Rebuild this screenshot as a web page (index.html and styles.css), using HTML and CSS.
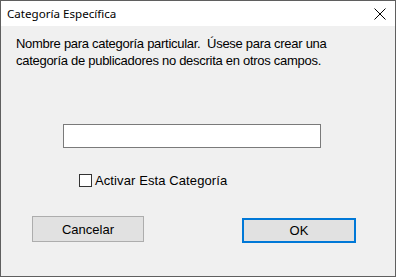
FILE: index.html
```html
<!DOCTYPE html>
<html>
<head>
  <meta charset="utf-8">
  <title>Categoría Específica</title>
  <link rel="stylesheet" href="styles.css">
</head>
<body>
  <div class="window">
    <!-- Title bar -->
    <div class="titlebar">
      <span class="title">Categoría Específica</span>
      <span class="close">
        <svg width="12" height="12" viewBox="0 0 12 12">
          <path d="M0.5 0.5 L11.5 11.5 M11.5 0.5 L0.5 11.5" stroke="#000" stroke-width="1" fill="none"/>
        </svg>
      </span>
    </div>

    <div class="content">
      <p class="description">Nombre para categoría particular.&nbsp; Úsese para crear una<br>categoría de publicadores no descrita en otros campos.</p>

      <input type="text" class="name-input">

      <label class="check-row">
        <span class="checkbox"></span>
        <span>Activar Esta Categoría</span>
      </label>

      <div class="buttons">
        <button class="btn">Cancelar</button>
        <button class="btn btn-default">OK</button>
      </div>
    </div>
  </div>
</body>
</html>
```

FILE: styles.css
```css
body {
  margin: 0;
  background-color: #f0f0f0;
}

.window {
  width: 396px;
  height: 277px;
  box-sizing: border-box;
  border: 1px solid #5f5f5f;
  background-color: #f0f0f0;
  display: flex;
  flex-direction: column;
}

.titlebar {
  height: 25px;
  background-color: white;
  display: flex;
  align-items: center;
  justify-content: space-between;
  padding: 0 9px 0 6px;
}

.title {
  font-family: "Noto Sans", sans-serif;
  font-size: 11.6px;
  color: black;
}

.close {
  display: flex;
  width: 12px;
  height: 12px;
}

.content {
  padding: 9px 0 0 15px;
  font-family: "Liberation Sans", Arial, sans-serif;
  font-size: 13px;
  letter-spacing: -0.28px;
  color: black;
}

.description {
  margin: 0;
  line-height: 17px;
}

.name-input {
  display: block;
  margin: 55px 0 0 47px;
  width: 258px;
  height: 24px;
  box-sizing: border-box;
  border: 1px solid #7a7a7a;
  background-color: white;
  outline: none;
}

/* checkbox row */
.check-row {
  display: flex;
  align-items: center;
  gap: 3px;
  margin: 25px 0 0 63px;
  letter-spacing: 0.1px;
}

.checkbox {
  width: 13px;
  height: 13px;
  box-sizing: border-box;
  border: 1px solid #333;
  background-color: white;
}

.buttons {
  display: flex;
  align-items: flex-start;
  margin: 28px 0 0 16px;
}

.btn {
  width: 112px;
  height: 26px;
  border: 1px solid #adadad;
  background-color: #e1e1e1;
  font-family: "Liberation Sans", Arial, sans-serif;
  font-size: 13px;
  color: black;
  padding: 0;
}

.btn-default {
  width: 114px;
  height: 25px;
  margin: 2px 0 0 98px;
  border: 2px solid #0078d7;
}
```
